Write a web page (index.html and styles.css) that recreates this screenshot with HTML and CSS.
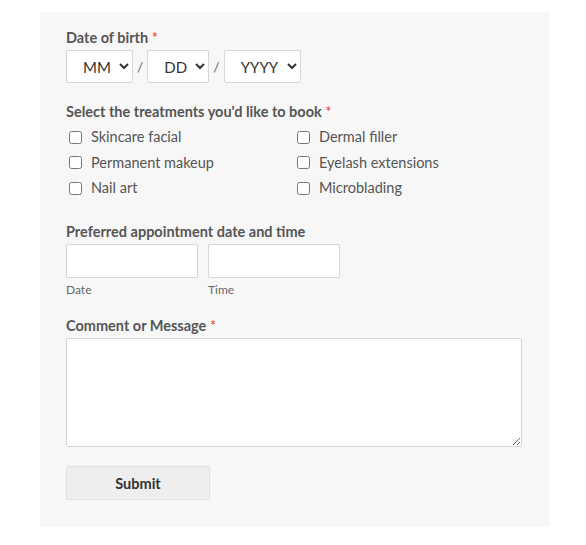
FILE: index.html
```html
<!DOCTYPE html>
<html>
<head>
  <title>Booking Form</title>
  <link rel="stylesheet" href="styles.css">
</head>
<body>
  <form class="card">
    <div class="field">
      <label class="label">Date of birth <span class="req">*</span></label>
      <div class="dob">
        <select class="sel sel-mm"><option>MM</option></select>
        <span class="slash">/</span>
        <select class="sel sel-dd"><option>DD</option></select>
        <span class="slash">/</span>
        <select class="sel sel-yy"><option>YYYY</option></select>
      </div>
    </div>

    <div class="field field-checks">
      <label class="label">Select the treatments you'd like to book <span class="req">*</span></label>
      <div class="checks">
        <label class="check"><input type="checkbox"> Skincare facial</label>
        <label class="check"><input type="checkbox"> Dermal filler</label>
        <label class="check"><input type="checkbox"> Permanent makeup</label>
        <label class="check"><input type="checkbox"> Eyelash extensions</label>
        <label class="check"><input type="checkbox"> Nail art</label>
        <label class="check"><input type="checkbox"> Microblading</label>
      </div>
    </div>

    <div class="field">
      <label class="label">Preferred appointment date and time</label>
      <div class="datetime">
        <div class="sub">
          <input type="text" class="box">
          <span class="hint">Date</span>
        </div>
        <div class="sub">
          <input type="text" class="box">
          <span class="hint">Time</span>
        </div>
      </div>
    </div>

    <div class="field field-msg">
      <label class="label">Comment or Message <span class="req">*</span></label>
      <textarea class="msg"></textarea>
    </div>

    <button type="button" class="submit">Submit</button>
  </form>
</body>
</html>
```

FILE: styles.css
```css
body {
  margin: 0;
  font-family: Lato, "Open Sans", sans-serif;
  background: #fff;
  color: #555;
}

.card {
  width: 456px;
  margin: 12px 0 0 40px;
  padding: 17px 28px 27px 26px;
  background: #f7f7f7;
  border-radius: 4px;
}

.field {
  margin-bottom: 20px;
}

.field-checks {
  margin-bottom: 26px;
}

.field-msg {
  margin-bottom: 19px;
}

.label {
  display: block;
  font-size: 14.5px;
  font-weight: bold;
  color: #555;
  line-height: 18px;
  margin-bottom: 3px;
}

.req {
  color: #e03a3a;
  font-weight: normal;
}

.dob {
  display: flex;
  align-items: center;
  gap: 4px;
}

.sel {
  height: 33px;
  border: 1px solid #d6d6d6;
  border-radius: 2px;
  background: #fff;
  font-family: Lato, sans-serif;
  font-size: 15px;
  color: #333;
  padding: 0 4px 0 12px;
}

.sel-mm { width: 67px; }
.sel-dd { width: 62px; }
.sel-yy { width: 77px; }

.slash {
  font-size: 14px;
  color: #666;
}

.checks {
  display: grid;
  grid-template-columns: 228px 1fr;
  row-gap: 7.5px;
  padding-top: 4px;
}

.check {
  display: flex;
  align-items: center;
  font-size: 14.5px;
  color: #555;
  line-height: 18px;
}

.check input {
  width: 13px;
  height: 13px;
  margin: 0 9px 0 3px;
}

.datetime {
  display: flex;
  gap: 10px;
}

.sub {
  display: flex;
  flex-direction: column;
}

.box {
  width: 132px;
  height: 34px;
  box-sizing: border-box;
  border: 1px solid #d6d6d6;
  border-radius: 2px;
  background: #fff;
}

.hint {
  font-size: 12px;
  color: #666;
  margin-top: 4px;
}

.msg {
  display: block;
  width: 456px;
  height: 109px;
  box-sizing: border-box;
  border: 1px solid #d6d6d6;
  border-radius: 2px;
  background: #fff;
}

.submit {
  width: 144px;
  height: 34px;
  border: 1px solid #e2e2e2;
  border-radius: 2px;
  background: #eee;
  font-family: Lato, sans-serif;
  font-size: 14.5px;
  font-weight: bold;
  color: #333;
}
```
